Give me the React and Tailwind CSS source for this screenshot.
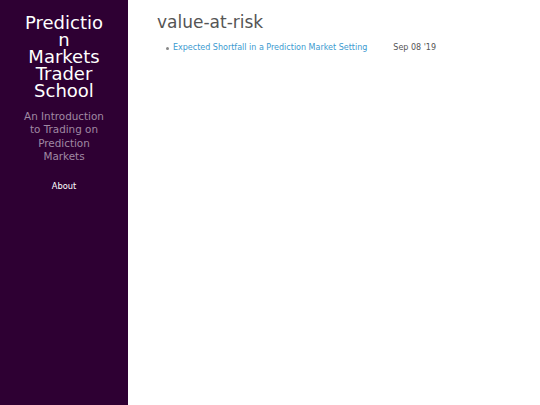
import React from 'react';

const posts = [
  { title: 'Expected Shortfall in a Prediction Market Setting', date: 'Sep 08 \'19' },
];

const App = () => {
  return (
    <div className="flex min-h-[405px] w-[540px] font-['DejaVu_Sans',sans-serif]">
      {/* Sidebar */}
      <aside className="w-[128px] shrink-0 bg-[#2e0033] px-[22px] pt-[14px] text-center">
        <h1 className="break-words text-[18px] leading-[17px] text-white">
          Prediction Markets Trader School
        </h1>
        <p className="mt-[11px] text-[10.4px] leading-[13.3px] text-[#a089a3]">
          An Introduction to Trading on Prediction Markets
        </p>
        <nav className="mt-[9px]">
          <a className="text-[8.3px] text-white">About</a>
        </nav>
      </aside>

      {/* Content */}
      <main className="flex-1 bg-white pl-[29px] pt-[12px]">
        <h2 className="text-[17px] leading-[20px] text-[#555]">value-at-risk</h2>
        <ul className="mt-[10px] pl-[9px] text-[8px]">
          {posts.map((p, i) => (
            <li key={i} className="flex items-center">
              <span className="mr-[4px] h-[3px] w-[3px] rounded-full bg-[#888]" />
              <a className="text-[#3b9ad0]">{p.title}</a>
              <span className="ml-[26px] text-[#555]">{p.date}</span>
            </li>
          ))}
        </ul>
      </main>
    </div>
  );
};

export default App;
